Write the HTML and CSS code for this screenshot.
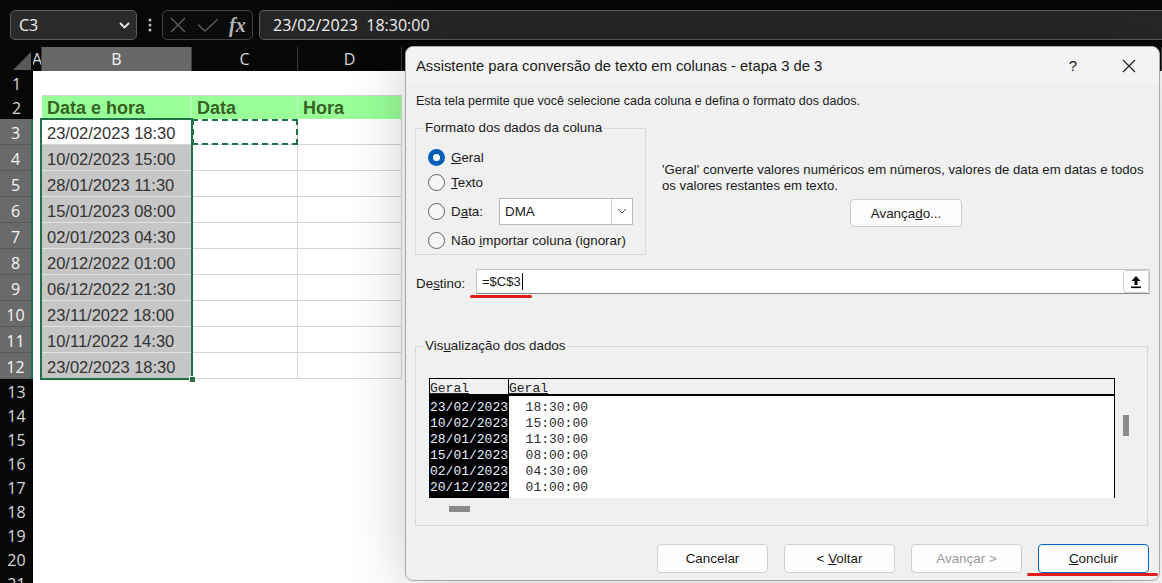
FILE: index.html
```html
<!DOCTYPE html>
<html lang="pt-BR">
<head>
<meta charset="utf-8">
<title>Excel</title>
<link rel="stylesheet" href="styles.css">
</head>
<body>
<div class="fbar">
  <div class="namebox"><span>C3</span><svg class="chev" width="11" height="7" viewBox="0 0 11 7"><path d="M1 1l4.5 4.5L10 1" fill="none" stroke="#eee" stroke-width="1.8"/></svg></div>
  <div class="vdots"><svg width="4" height="14" viewBox="0 0 4 14"><circle cx="2" cy="2" r="1.5" fill="#bbb"/><circle cx="2" cy="7" r="1.5" fill="#bbb"/><circle cx="2" cy="12" r="1.5" fill="#bbb"/></svg></div>
  <div class="fxbox">
    <svg width="16" height="16" viewBox="0 0 16 16"><path d="M1 1L15 15M15 1L1 15" stroke="#5e5e5e" stroke-width="1.3"/></svg>
    <svg width="22" height="14" viewBox="0 0 22 14"><path d="M1 6.5L8 13L21 1" fill="none" stroke="#5e5e5e" stroke-width="1.3"/></svg>
    <span class="fx">fx</span>
  </div>
  <div class="finput">23/02/2023  18:30:00</div>
</div>

<div class="sheet">
  <div class="row r24 hdr">
    <div class="corner"><svg width="19" height="18" viewBox="0 0 19 18"><path d="M18 0V18H0Z" fill="#5a5a5a"/></svg></div>
    <div class="ch cha">A</div><div class="ch chb">B</div><div class="ch">C</div><div class="ch">D</div><div class="ch"></div>
  </div>
  <div class="row r24"><div class="rh">1</div><div class="c"></div><div class="c"></div><div class="c"></div><div class="c"></div><div class="c"></div></div>
  <div class="row r24"><div class="rh">2</div><div class="c"></div><div class="c hd">Data e hora</div><div class="c hd">Data</div><div class="c hd">Hora</div><div class="c"></div></div>
  <div class="row"><div class="rh sel">3</div><div class="c"></div><div class="c gr">23/02/2023 18:30</div><div class="c gr marq"></div><div class="c gr"></div><div class="c"></div></div>
  <div class="row"><div class="rh sel">4</div><div class="c"></div><div class="c gr s">10/02/2023 15:00</div><div class="c gr"></div><div class="c gr"></div><div class="c"></div></div>
  <div class="row"><div class="rh sel">5</div><div class="c"></div><div class="c gr s">28/01/2023 11:30</div><div class="c gr"></div><div class="c gr"></div><div class="c"></div></div>
  <div class="row"><div class="rh sel">6</div><div class="c"></div><div class="c gr s">15/01/2023 08:00</div><div class="c gr"></div><div class="c gr"></div><div class="c"></div></div>
  <div class="row"><div class="rh sel">7</div><div class="c"></div><div class="c gr s">02/01/2023 04:30</div><div class="c gr"></div><div class="c gr"></div><div class="c"></div></div>
  <div class="row"><div class="rh sel">8</div><div class="c"></div><div class="c gr s">20/12/2022 01:00</div><div class="c gr"></div><div class="c gr"></div><div class="c"></div></div>
  <div class="row"><div class="rh sel">9</div><div class="c"></div><div class="c gr s">06/12/2022 21:30</div><div class="c gr"></div><div class="c gr"></div><div class="c"></div></div>
  <div class="row"><div class="rh sel">10</div><div class="c"></div><div class="c gr s">23/11/2022 18:00</div><div class="c gr"></div><div class="c gr"></div><div class="c"></div></div>
  <div class="row"><div class="rh sel">11</div><div class="c"></div><div class="c gr s">10/11/2022 14:30</div><div class="c gr"></div><div class="c gr"></div><div class="c"></div></div>
  <div class="row"><div class="rh sel">12</div><div class="c"></div><div class="c gr s">23/02/2023 18:30</div><div class="c gr"></div><div class="c gr"></div><div class="c"></div></div>
  <div class="row r24"><div class="rh">13</div><div class="c"></div><div class="c"></div><div class="c"></div><div class="c"></div><div class="c"></div></div>
  <div class="row r24"><div class="rh">14</div><div class="c"></div><div class="c"></div><div class="c"></div><div class="c"></div><div class="c"></div></div>
  <div class="row r24"><div class="rh">15</div><div class="c"></div><div class="c"></div><div class="c"></div><div class="c"></div><div class="c"></div></div>
  <div class="row r24"><div class="rh">16</div><div class="c"></div><div class="c"></div><div class="c"></div><div class="c"></div><div class="c"></div></div>
  <div class="row r24"><div class="rh">17</div><div class="c"></div><div class="c"></div><div class="c"></div><div class="c"></div><div class="c"></div></div>
  <div class="row r24"><div class="rh">18</div><div class="c"></div><div class="c"></div><div class="c"></div><div class="c"></div><div class="c"></div></div>
  <div class="row r24"><div class="rh">19</div><div class="c"></div><div class="c"></div><div class="c"></div><div class="c"></div><div class="c"></div></div>
  <div class="row r24"><div class="rh">20</div><div class="c"></div><div class="c"></div><div class="c"></div><div class="c"></div><div class="c"></div></div>
  <div class="row r24"><div class="rh">21</div><div class="c"></div><div class="c"></div><div class="c"></div><div class="c"></div><div class="c"></div></div>
  <div class="selbox"><span class="handle"></span></div>
</div>

<div class="dialog">
  <div class="titlebar">
    <span class="title">Assistente para conversão de texto em colunas - etapa 3 de 3</span>
    <span class="tbbtn help">?</span>
    <span class="tbbtn close"><svg width="14" height="14" viewBox="0 0 14 14"><path d="M1 1L13 13M13 1L1 13" stroke="#1a1a1a" stroke-width="1.1"/></svg></span>
  </div>
  <p class="desc">Esta tela permite que você selecione cada coluna e defina o formato dos dados.</p>
  <div class="mid">
    <fieldset class="fmt">
      <legend>Formato dos dados da coluna</legend>
      <div class="opt o1"><span class="radio on"></span><span class="lbl"><u>G</u>eral</span></div>
      <div class="opt o2"><span class="radio"></span><span class="lbl"><u>T</u>exto</span></div>
      <div class="opt o3"><span class="radio"></span><span class="lbl dlabel">D<u>a</u>ta:</span>
        <div class="select"><span class="selval">DMA</span><span class="drop"><svg width="10" height="6" viewBox="0 0 10 6"><path d="M1 1l4 4 4-4" fill="none" stroke="#555" stroke-width="1"/></svg></span></div>
      </div>
      <div class="opt o4"><span class="radio"></span><span class="lbl">Não <u>i</u>mportar coluna (ignorar)</span></div>
    </fieldset>
    <div class="info">
      <p class="infotext">'Geral' converte valores numéricos em números, valores de data em datas e todos<br>os valores restantes em texto.</p>
      <button class="btn adv">Avança<u>d</u>o...</button>
    </div>
  </div>
  <div class="dest">
    <span class="dlab">De<u>s</u>tino:</span>
    <div class="dinput"><span class="dval">=$C$3</span><span class="caret"></span><span class="upbtn"><svg width="12" height="14" viewBox="0 0 12 14"><path d="M6 1L10.5 6H7.5V10H4.5V6H1.5Z" fill="#000"/><rect x="1" y="11.5" width="10" height="1.6" fill="#000"/></svg></span></div>
    <span class="redline rl1"></span>
  </div>
  <fieldset class="prev">
    <legend>Vis<u>u</u>alização dos dados</legend>
    <div class="pvwrap">
      <div class="pv">
        <div class="pvhead"><span class="pc1">Geral</span><span class="pc2">Geral</span></div>
        <div class="pvbody">
          <div class="pcol1">23/02/2023<br>10/02/2023<br>28/01/2023<br>15/01/2023<br>02/01/2023<br>20/12/2022</div>
          <div class="pcol2">  18:30:00<br>  15:00:00<br>  11:30:00<br>  08:00:00<br>  04:30:00<br>  01:00:00</div>
        </div>
      </div>
      <div class="vscroll"><span class="vthumb"></span></div>
    </div>
    <div class="hscroll"><span class="hthumb"></span></div>
  </fieldset>
  <div class="buttons">
    <button class="btn">Cancelar</button>
    <button class="btn">&lt; <u>V</u>oltar</button>
    <button class="btn dis">Avançar &gt;</button>
    <button class="btn def"><u>C</u>oncluir</button>
    <span class="redline rl2"></span>
  </div>
</div>
</body>
</html>
```

FILE: styles.css
```css
* { box-sizing: border-box; }
html, body { margin: 0; padding: 0; }
body {
  width: 1162px;
  height: 583px;
  overflow: hidden;
  background: #070707;
  position: relative;
  font-family: "Liberation Sans", Arial, sans-serif;
}

/* formula bar */
.fbar {
  display: flex;
  align-items: center;
  height: 30px;
  margin: 10px 0 7px 10px;
}
.namebox {
  width: 127px;
  height: 30px;
  border: 1px solid #5c5c5c;
  border-radius: 5px;
  background: #2a2a2a;
  display: flex;
  align-items: center;
  justify-content: space-between;
  padding: 0 6px 0 8px;
  color: #f2f2f2;
  font-family: "Open Sans", sans-serif;
  font-size: 16px;
}
.vdots {
  width: 25px;
  display: flex;
  justify-content: center;
}
.fxbox {
  width: 91px;
  height: 30px;
  border: 1px solid #444;
  border-radius: 5px;
  background: #0b0b0b;
  display: flex;
  align-items: center;
  padding: 0 0 0 7px;
  gap: 11px;
}
.fx {
  font-family: "Liberation Serif", serif;
  font-style: italic;
  font-weight: bold;
  font-size: 20px;
  color: #b4b4b4;
  margin-left: -1px;
}
.finput {
  flex: 1;
  height: 30px;
  margin-left: 6px;
  border: 1px solid #5c5c5c;
  border-right: none;
  border-radius: 5px 0 0 5px;
  background: #262626;
  color: #f2f2f2;
  font-family: "Open Sans", sans-serif;
  font-size: 16px;
  white-space: pre;
  padding-left: 13px;
  display: flex;
  align-items: center;
}

/* sheet */
.sheet { position: relative; }
.row {
  display: grid;
  grid-template-columns: 33px 9px 150px 106px 104px 1fr;
  height: 26px;
}
.row.r24 { height: 24px; }
.corner {
  background: #070707;
  display: flex;
  align-items: flex-end;
  justify-content: flex-end;
  padding: 0 1px 3px 0;
}
.ch {
  background: #070707;
  color: #d6d6d6;
  font-family: "Open Sans", sans-serif;
  font-size: 16px;
  line-height: 24px;
  text-align: center;
  border-right: 1px solid #3c3c3c;
}
.cha {
  overflow: hidden;
  text-align: left;
  text-indent: -1px;
}
.chb {
  background: #686868;
  color: #f4f4f4;
  border-bottom: 2px solid #217346;
}
.rh {
  background: #070707;
  color: #d8d8d8;
  font-family: "Open Sans", sans-serif;
  font-size: 16px;
  display: flex;
  align-items: center;
  justify-content: center;
  padding-top: 2px;
  border-bottom: 1px solid #3a3a3a;
}
.rh.sel {
  background: #6a6a6a;
  color: #f6f6f6;
  border-bottom-color: #595959;
  border-right: 2px solid #217346;
}
.c {
  background: #fff;
  font-size: 16.5px;
  color: #333;
  padding: 3px 0 0 5px;
  display: flex;
  align-items: center;
  white-space: nowrap;
}
.c.hd {
  background: #99ff99;
  border-top: 1px solid #d2d2d2;
  border-right: 1px solid #c6f5c6;
  font-weight: bold;
  font-size: 18px;
  color: #376223;
  padding-top: 1px;
}
.c.gr {
  border-right: 1px solid #d6d6d6;
  border-bottom: 1px solid #d6d6d6;
}
.c.s {
  background: #c6c6c6;
  border-bottom-color: #e2e2e2;
}
.c.marq {
  outline: 2px dashed #217346;
  outline-offset: -2px;
}
.selbox {
  position: absolute;
  left: 40px;
  top: 71px;
  width: 153px;
  height: 262px;
  border: 2px solid #217346;
  pointer-events: none;
}
.handle {
  position: absolute;
  right: -5px;
  bottom: -5px;
  width: 7px;
  height: 7px;
  background: #217346;
  border: 1px solid #fff;
}

/* dialog */
.dialog {
  position: absolute;
  left: 405px;
  top: 46px;
  width: 755px;
  height: 535px;
  background: #f0f0f0;
  border: 1px solid #a8a8a8;
  border-radius: 8px;
  box-shadow: 0 6px 60px rgba(0, 0, 0, 0.2);
  color: #1a1a1a;
  font-size: 13px;
  overflow: hidden;
}
.titlebar {
  height: 36px;
  background: #f3f3f3;
  display: flex;
  align-items: center;
  padding: 1px 0 0 10px;
}
.title {
  flex: 1;
  font-size: 14.8px;
  color: #1a1a1a;
}
.tbbtn {
  width: 46px;
  display: flex;
  justify-content: center;
  align-items: center;
  font-size: 15px;
}
.help { margin-right: 10px; }
.close { margin-right: 7px; }
.desc {
  margin: 10px 0 0 10px;
  font-size: 12.5px;
  line-height: 16px;
}
.mid {
  display: flex;
  margin-top: 12px;
}
fieldset {
  margin: 0;
  padding: 0;
  border: 1px solid #d8d8d8;
  min-width: 0;
}
legend {
  padding: 0 2px;
  line-height: 14px;
  font-size: 13.4px;
}
.fmt {
  margin-left: 9px;
  width: 231px;
  height: 134px;
  padding: 10px 0 0 12px;
}
.fmt legend { margin-left: -5px; }
.opt {
  display: flex;
  align-items: center;
  height: 25px;
}
.opt.o3 { height: 31px; padding-top: 1px; }
.opt.o4 { height: 28px; padding-top: 1px; }
.radio {
  width: 17px;
  height: 17px;
  border-radius: 50%;
  border: 1px solid #5f5f5f;
  background: #f6f6f6;
  flex: none;
  margin-right: 6px;
}
.radio.on {
  border: 5px solid #005fb8;
  background: #fff;
}
.lbl { font-size: 13.4px; }
.dlabel { width: 48px; }
.select {
  width: 134px;
  height: 27px;
  background: #fff;
  border: 1px solid #b9b9b9;
  display: flex;
  align-items: center;
}
.selval { flex: 1; padding-left: 5px; font-size: 13.4px; }
.drop {
  width: 21px;
  height: 100%;
  border-left: 1px solid #cfcfcf;
  display: flex;
  align-items: center;
  justify-content: center;
}
.info {
  margin-left: 16px;
  width: 488px;
  padding-top: 41px;
  display: flex;
  flex-direction: column;
  align-items: center;
}
.infotext {
  margin: 0;
  align-self: stretch;
  font-size: 13.2px;
  line-height: 16px;
}
.btn {
  font-family: "Liberation Sans", Arial, sans-serif;
  font-size: 13.4px;
  color: #1a1a1a;
  background: #fdfdfd;
  border: 1px solid #cecece;
  border-radius: 4px;
  height: 29px;
  width: 111px;
  padding: 0;
}
.adv { margin-top: 5px; width: 112px; height: 28px; }
.dest {
  position: relative;
  display: flex;
  align-items: center;
  margin-top: 14px;
  padding-left: 10px;
}
.dlab { width: 60px; font-size: 13.4px; padding-top: 3px; }
.dinput {
  width: 674px;
  height: 25px;
  background: #fff;
  border: 1px solid #c4c4c4;
  border-bottom-color: #8a8a8a;
  display: flex;
  align-items: center;
  padding-left: 5px;
  font-size: 13px;
}
.caret {
  width: 1px;
  height: 17px;
  background: #000;
  margin-left: 1px;
}
.upbtn {
  margin-left: auto;
  width: 26px;
  height: 23px;
  border: 1px solid #cfcfcf;
  border-radius: 3px;
  background: #fff;
  display: flex;
  align-items: center;
  justify-content: center;
}
.redline {
  position: absolute;
  height: 3px;
  border-radius: 2px;
  background: #e21c1c;
}
.rl1 { left: 64px; top: 26px; width: 62px; }
.prev {
  margin: 45px 0 0 9px;
  width: 733px;
  padding: 0 0 13px 13px;
}
.prev legend { margin-left: -6px; }
.pvwrap {
  display: flex;
  margin-top: 25px;
}
.pv {
  width: 686px;
  height: 120px;
  border: 1px solid #000;
  border-bottom: none;
  font-family: "Liberation Mono", "Courier New", monospace;
  font-size: 13px;
  overflow: hidden;
}
.pvhead {
  height: 17px;
  display: flex;
  background: #f0f0f0;
  border-bottom: 2px solid #000;
  line-height: 13px;
  padding-top: 3px;
  color: #222;
}
.pvhead span { text-decoration: underline; }
.pc1 { width: 79px; border-right: 1px solid #000; margin-top: -3px; padding-top: 3px; }
.pvbody {
  display: flex;
  background: #fff;
  height: 102px;
}
.pcol1 {
  width: 79px;
  background: #000;
  color: #e8efff;
  border-right: 1px solid #000;
  line-height: 16px;
  padding-top: 4px;
  white-space: pre;
}
.pcol2 {
  color: #2c2c2c;
  line-height: 16px;
  padding-top: 4px;
  padding-left: 1px;
  white-space: pre;
}
.vscroll {
  margin-left: 8px;
  padding-top: 37px;
}
.vthumb {
  display: block;
  width: 6px;
  height: 21px;
  background: #8a8a8a;
}
.hscroll { padding: 8px 0 0 20px; }
.hthumb {
  display: block;
  width: 21px;
  height: 6px;
  background: #8a8a8a;
}
.buttons {
  position: relative;
  display: flex;
  justify-content: flex-end;
  gap: 16px;
  margin-top: 18px;
  padding-right: 10px;
}
.btn.dis { color: #9b9b9b; }
.btn.def { border-color: #0067c0; }
.rl2 { left: 621px; top: 29px; width: 131px; }
```
